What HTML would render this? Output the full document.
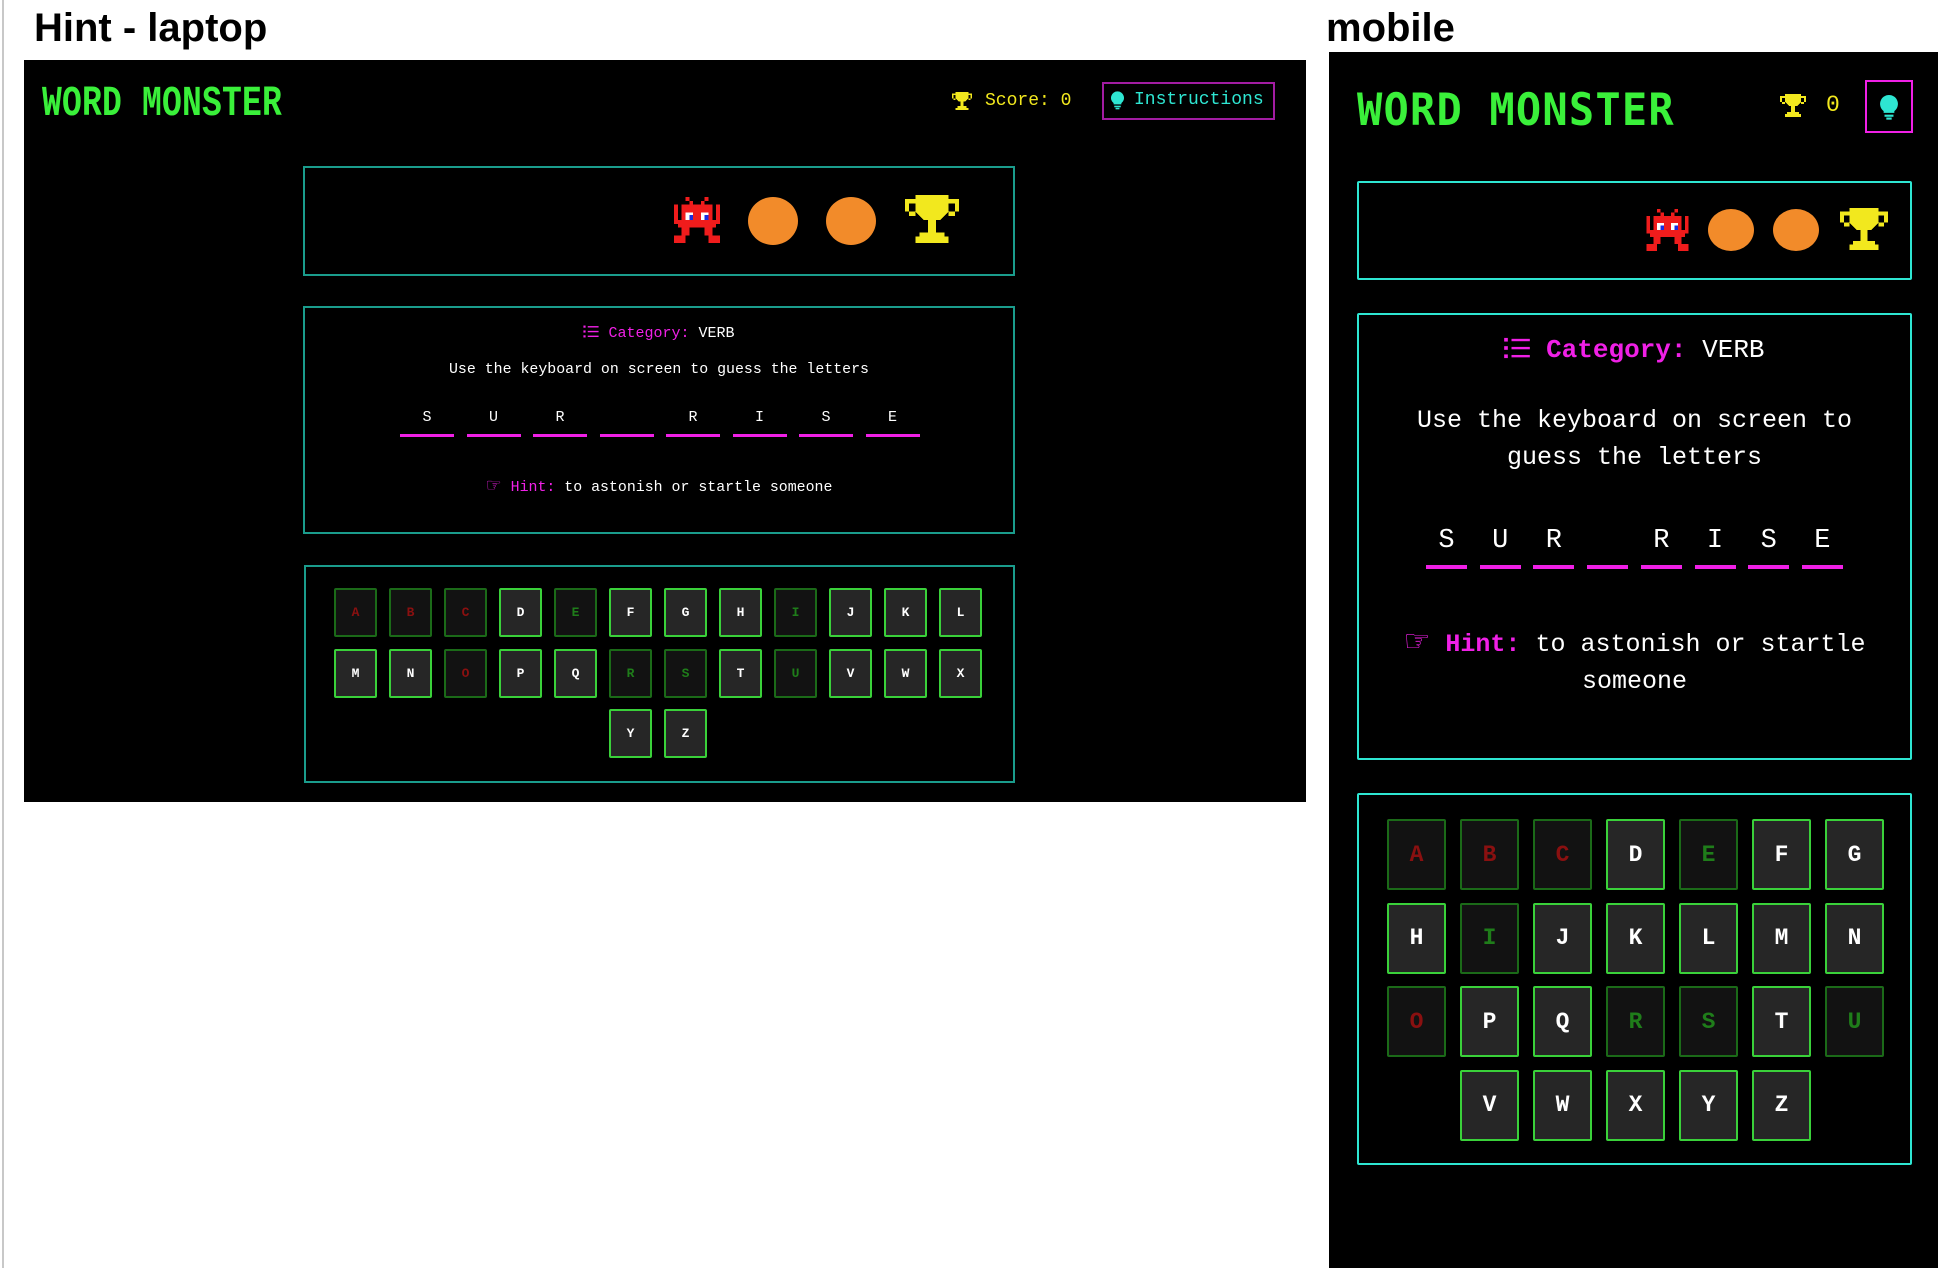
<!DOCTYPE html>
<html><head><meta charset="utf-8"><style>
*{margin:0;padding:0;box-sizing:border-box}
body{width:1956px;height:1268px;background:#fff;position:relative;overflow:hidden;font-family:"Liberation Mono",monospace}
.a{position:absolute}
.lbl{font-family:"Liberation Sans",sans-serif;font-weight:bold;color:#000;white-space:nowrap}
.panel{background:#000}
.box{border:2px solid #1a9c8c}
.mbox{border:2px solid #2ee6d2;border-radius:2px}
.t{white-space:nowrap;text-align:center}
.key{position:absolute;border:2px solid #3ad13a;background:#262626;color:#fff;font-weight:bold;display:flex;align-items:center;justify-content:center;border-radius:2px}
.key.d{background:#121212;border-color:#1b6a18}
.key.r{color:#8a1010}.key.g{color:#1f7d1a}
.ul{position:absolute;background:#f020e6}
.title{color:#3af03a;font-weight:bold;white-space:nowrap;transform-origin:0 0}
.hand{font-family:"DejaVu Sans",sans-serif;font-weight:bold}
</style></head><body>
<div class="a" style="left:2px;top:0;width:2px;height:1268px;background:#c8c8c8"></div>
<div class="a lbl" style="left:34px;top:6px;font-size:40px">Hint - laptop</div>
<div class="a lbl" style="left:1326px;top:6px;font-size:40px">mobile</div>

<svg width="0" height="0" style="position:absolute">
<defs>
<symbol id="mon" viewBox="0 0 14 12" shape-rendering="crispEdges">
<g fill="#f01c1c"><rect x="4" y="0" width="1" height="1"/><rect x="9" y="0" width="1" height="1"/><rect x="5" y="1" width="1" height="1"/><rect x="8" y="1" width="1" height="1"/><rect x="3" y="2" width="8" height="6"/><rect x="1" y="2" width="1" height="5"/><rect x="2" y="6" width="1" height="2"/><rect x="12" y="2" width="1" height="5"/><rect x="11" y="6" width="1" height="2"/><rect x="3" y="8" width="2" height="2"/><rect x="1" y="10" width="3" height="2"/><rect x="9" y="8" width="2" height="2"/><rect x="10" y="10" width="3" height="2"/></g>
<g fill="#fff"><rect x="4" y="4" width="2" height="2"/><rect x="8" y="4" width="2" height="2"/></g>
<g fill="#1a2de0"><rect x="5" y="4.7" width="1" height="1.3"/><rect x="9" y="4.7" width="1" height="1.3"/></g>
</symbol>
<symbol id="tro" viewBox="0 0 14 12" shape-rendering="crispEdges">
<g fill="#f2e81e"><path d="M3 0H11V4L9 6H5L3 4Z"/><rect x="0.5" y="1" width="2.5" height="1"/><rect x="0.5" y="1" width="1" height="3"/><rect x="1.5" y="4" width="1.5" height="1"/><rect x="11" y="1" width="2.5" height="1"/><rect x="12.5" y="1" width="1" height="3"/><rect x="11" y="4" width="1.5" height="1"/><rect x="6" y="6" width="2" height="3"/><rect x="4" y="9" width="6" height="1"/><rect x="3" y="10" width="8" height="1.5"/></g>
</symbol>
<symbol id="bulb" viewBox="0 0 10 14"><path d="M5 0A5 5 0 0 0 2 9V10H8V9A5 5 0 0 0 5 0Z" fill="#2ee6d2"/><rect x="2.5" y="11" width="5" height="1.2" fill="#2ee6d2"/><rect x="3.5" y="12.6" width="3" height="1.2" fill="#2ee6d2"/></symbol>
<symbol id="list" viewBox="0 0 14 12"><g fill="#f020e6"><rect x="0" y="0.5" width="2" height="2"/><rect x="0" y="5" width="2" height="2"/><rect x="0" y="9.5" width="2" height="2"/><rect x="4" y="1" width="10" height="1.3"/><rect x="4" y="5.4" width="10" height="1.3"/><rect x="4" y="9.8" width="10" height="1.3"/></g></symbol>
</defs></svg>

<!-- LAPTOP -->
<div class="a panel" style="left:24px;top:60px;width:1282px;height:742px"></div>
<div class="a title" style="left:42px;top:80px;font-size:33px;transform:scaleY(1.3);letter-spacing:0.2px">WORD MONSTER</div>
<svg class="a" style="left:951px;top:92px" width="22" height="19"><use href="#tro"/></svg>
<div class="a" style="left:985px;top:91px;font-size:18px;color:#f2e81e;white-space:nowrap">Score: 0</div>
<div class="a" style="left:1102px;top:82px;width:173px;height:38px;border:2px solid #a21ca2"></div>
<svg class="a" style="left:1111px;top:91px" width="13" height="19"><use href="#bulb"/></svg>
<div class="a" style="left:1134px;top:90px;font-size:18px;color:#2ee6d2;white-space:nowrap">Instructions</div>

<div class="a box" style="left:303px;top:166px;width:712px;height:110px"></div>
<svg class="a" style="left:669px;top:197px" width="56" height="46"><use href="#mon"/></svg>
<svg class="a" style="left:748px;top:197px" width="50" height="48"><ellipse cx="25" cy="24" rx="25" ry="24" fill="#f28b2a"/></svg>
<svg class="a" style="left:826px;top:197px" width="50" height="48"><ellipse cx="25" cy="24" rx="25" ry="24" fill="#f28b2a"/></svg>
<svg class="a" style="left:902px;top:195px" width="60" height="50"><use href="#tro"/></svg>

<div class="a box" style="left:303px;top:306px;width:712px;height:228px"></div>
<div class="a t" style="left:303px;top:325px;width:712px;font-size:15px;color:#fff"><svg width="16" height="13" style="vertical-align:-1px"><use href="#list"/></svg> <span style="color:#f020e6">Category:</span> VERB</div>
<div class="a t" style="left:303px;top:362px;width:712px;font-size:14.9px;color:#fff">Use the keyboard on screen to guess the letters</div>
<div class="a t" style="left:303px;top:475px;width:712px;font-size:14.9px;color:#fff"><span style="color:#f020e6"><span class="hand" style="font-size:18px">☞</span> Hint:</span> to astonish or startle someone</div>

<div class="a box" style="left:304px;top:565px;width:711px;height:218px"></div>

<!-- MOBILE -->
<div class="a panel" style="left:1329px;top:52px;width:609px;height:1216px"></div>
<div class="a title" style="left:1357px;top:84px;font-size:42px;transform:scaleY(1.05);letter-spacing:1.2px;font-family:'DejaVu Sans Mono','Liberation Mono',monospace">WORD MONSTER</div>
<svg class="a" style="left:1779px;top:94px" width="28" height="24"><use href="#tro"/></svg>
<div class="a" style="left:1826px;top:92px;font-size:23px;color:#f2e81e">0</div>
<div class="a" style="left:1865px;top:80px;width:48px;height:53px;border:2px solid #f020e6"></div>
<svg class="a" style="left:1880px;top:95px" width="18" height="25"><use href="#bulb"/></svg>

<div class="a mbox" style="left:1357px;top:181px;width:555px;height:99px"></div>
<svg class="a" style="left:1642px;top:209px" width="51" height="42"><use href="#mon"/></svg>
<svg class="a" style="left:1708px;top:209px" width="46" height="42"><ellipse cx="23" cy="21" rx="23" ry="21" fill="#f28b2a"/></svg>
<svg class="a" style="left:1773px;top:209px" width="46" height="42"><ellipse cx="23" cy="21" rx="23" ry="21" fill="#f28b2a"/></svg>
<svg class="a" style="left:1836px;top:208px" width="56" height="44"><use href="#tro"/></svg>

<div class="a mbox" style="left:1357px;top:313px;width:555px;height:447px"></div>
<div class="a t" style="left:1357px;top:335px;width:555px;font-size:26px;color:#fff"><svg width="26" height="22" style="vertical-align:-2px"><use href="#list"/></svg> <b style="color:#f020e6">Category:</b> VERB</div>
<div class="a t" style="left:1380px;top:402px;width:509px;font-size:25px;line-height:37px;color:#fff;white-space:normal">Use the keyboard on screen to guess the letters</div>
<div class="a t" style="left:1380px;top:623px;width:509px;font-size:25px;line-height:37px;color:#fff;white-space:normal"><span style="color:#f020e6"><span class="hand" style="font-size:30px">☞</span> <b>Hint:</b></span> to astonish or startle someone</div>

<div class="a mbox" style="left:1357px;top:793px;width:555px;height:372px"></div>
<div id="lw"></div>

<script>
var w="SUR_RISE";
var h="";
for(var i=0;i<8;i++){
 var x=400+66.5*i;
 h+='<div class="ul" style="left:'+x+'px;top:434px;width:54px;height:3px"></div>';
 if(w[i]!="_")h+='<div class="a" style="left:'+x+'px;top:409px;width:54px;text-align:center;font-size:15px;color:#fff">'+w[i]+'</div>';
 var mx=1426+53.7*i;
 h+='<div class="ul" style="left:'+mx+'px;top:565px;width:41px;height:4px"></div>';
 if(w[i]!="_")h+='<div class="a" style="left:'+mx+'px;top:526px;width:41px;text-align:center;font-size:27px;color:#fff">'+w[i]+'</div>';
}
var st={A:"d r",B:"d r",C:"d r",E:"d g",I:"d g",O:"d r",R:"d g",S:"d g",U:"d g"};
var L="ABCDEFGHIJKLMNOPQRSTUVWXYZ";
for(var i=0;i<26;i++){
 var c=L[i],cl=st[c]||"";
 var r,col;
 if(i<24){r=Math.floor(i/12);col=i%12;}else{r=2;col=i-19;}
 h+='<div class="key '+cl+'" style="left:'+(334+55*col)+'px;top:'+(588+60.5*r)+'px;width:43px;height:49px;font-size:13px">'+c+'</div>';
 var mr,mc;
 if(i<21){mr=Math.floor(i/7);mc=i%7;}else{mr=3;mc=i-20;}
 h+='<div class="key '+cl+'" style="left:'+(1387+73*mc)+'px;top:'+(819+83.5*mr)+'px;width:59px;height:71px;font-size:23px">'+c+'</div>';
}
document.getElementById("lw").outerHTML=h;
</script>
</body></html>
